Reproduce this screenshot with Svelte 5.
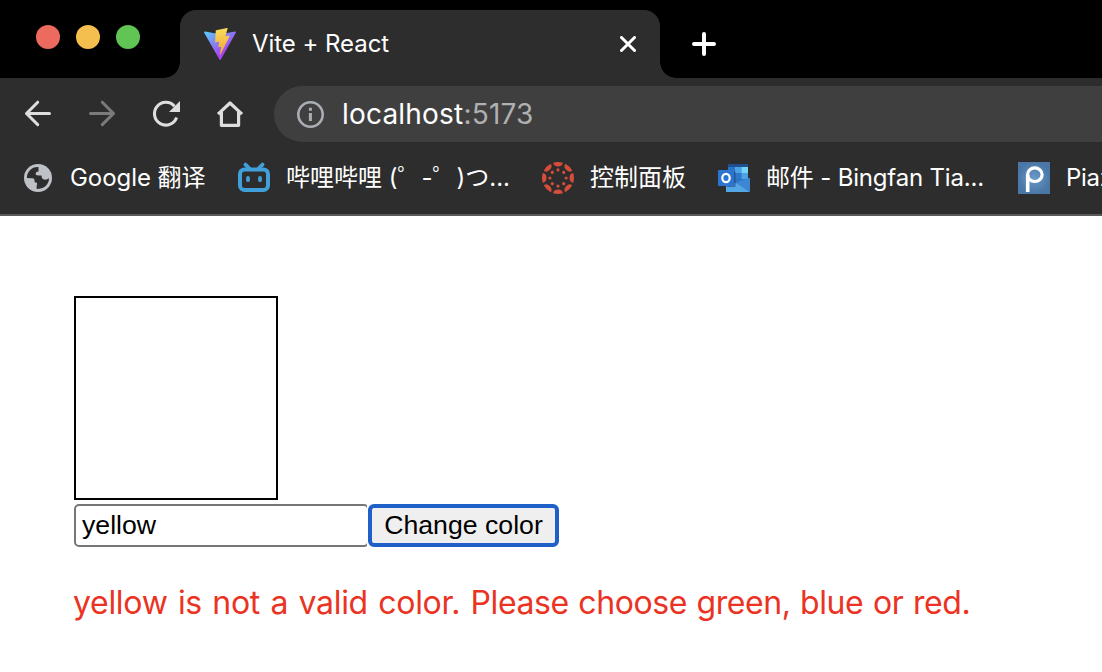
<script>
  const bookmarks = [
    { icon: 'globe', label: 'Google 翻译', width: 216, spacing: -0.05 },
    { icon: 'bili', label: '哔哩哔哩 (゜-゜)つ...', width: 304, spacing: 0 },
    { icon: 'canvas', label: '控制面板', width: 176, spacing: 0 },
    { icon: 'outlook', label: '邮件 - Bingfan Tia...', width: 300, spacing: -0.18 },
    { icon: 'piazza', label: 'Piazza', width: 120, spacing: -0.3 }
  ];
  const spokes = [0, 45, 90, 135, 180, 225, 270, 315];
  let color = $state('yellow');
</script>

<div class="window">
  <header>
    <div class="tabstrip">
      <div class="lights"><i class="red"></i><i class="amber"></i><i class="green"></i></div>
      <div class="tab">
        <svg width="32" height="32" viewBox="0 0 256 257">
          <defs>
            <linearGradient id="v1" x1="-.828%" x2="57.636%" y1="7.652%" y2="78.411%"><stop offset="0" stop-color="#5cc8fa" /><stop offset="1" stop-color="#a843f0" /></linearGradient>
            <linearGradient id="v2" x1="43.376%" x2="50.316%" y1="2.242%" y2="89.03%"><stop offset="0" stop-color="#fbe36a" /><stop offset=".083" stop-color="#f9d857" /><stop offset="1" stop-color="#f3ab3c" /></linearGradient>
          </defs>
          <path fill="url(#v1)" d="M255.153 37.938L134.897 252.976c-2.483 4.44-8.862 4.466-11.382.048L.875 37.958c-2.746-4.814 1.371-10.646 6.827-9.67l120.385 21.517a6.537 6.537 0 0 0 2.322-.004l117.867-21.483c5.438-.991 9.574 4.796 6.877 9.62Z" />
          <path fill="url(#v2)" d="M185.432.063L96.44 17.501a3.268 3.268 0 0 0-2.634 3.014l-5.474 92.456a3.268 3.268 0 0 0 3.997 3.378l24.777-5.718c2.318-.535 4.413 1.507 3.936 3.838l-7.361 36.047c-.495 2.426 1.782 4.5 4.151 3.78l15.304-4.649c2.372-.72 4.652 1.36 4.15 3.788l-11.698 56.621c-.732 3.542 3.979 5.473 5.943 2.437l1.313-2.028l72.516-144.72c1.215-2.423-.88-5.186-3.54-4.672l-25.505 4.922c-2.396.462-4.435-1.77-3.759-4.114l16.646-57.705c.677-2.35-1.37-4.583-3.769-4.113Z" />
        </svg>
        <span class="title">Vite + React</span>
        <svg class="close" width="16" height="16" viewBox="0 0 16 16"><path d="M1.5 1.5 14.5 14.5M14.5 1.5 1.5 14.5" stroke="#fff" stroke-width="3" stroke-linecap="round" /></svg>
      </div>
      <svg class="plus" width="24" height="24" viewBox="0 0 24 24"><path d="M12 2V22M2 12H22" stroke="#fff" stroke-width="4" stroke-linecap="round" /></svg>
    </div>

    <nav class="toolbar">
      <svg class="nav" viewBox="0 0 32 32"><path d="M27.5 15.5H4.5M15.7 4.2 4.5 15.5 15.7 26.6" fill="none" stroke="#dedede" stroke-width="3" stroke-linecap="round" stroke-linejoin="round" /></svg>
      <svg class="nav" viewBox="0 0 32 32"><path d="M4.5 15.5H27.5M16.3 4.2 27.5 15.5 16.3 26.6" fill="none" stroke="#7b7b7b" stroke-width="3" stroke-linecap="round" stroke-linejoin="round" /></svg>
      <svg class="nav" viewBox="0 0 32 32"><path d="M26.6 19.5A11.4 11.4 0 1 1 24.5 8.2" fill="none" stroke="#dedede" stroke-width="3.1" /><path d="M30 3V14H19Z" fill="#dedede" /></svg>
      <svg class="nav" viewBox="0 0 32 32"><path d="M4 16.2 16 5 28 16.2M7.4 14V27.3H24.6V14" fill="none" stroke="#dedede" stroke-width="3.2" stroke-linejoin="round" /></svg>
      <div class="omnibox">
        <svg width="28" height="28" viewBox="0 0 28 28"><circle cx="14.5" cy="14.5" r="12.2" fill="none" stroke="#aaaeb4" stroke-width="2.6" /><path d="M12.9 7.8h3v3h-3ZM12.9 13h3v8h-3Z" fill="#aaaeb4" /></svg>
        <span class="url">localhost<em>:5173</em></span>
      </div>
    </nav>

    <div class="bookmarks">
      {#each bookmarks as b}
        <div class="bookmark" style:width="{b.width}px">
          {#if b.icon === 'globe'}
            <svg viewBox="0 0 32 32"><circle cx="16" cy="16" r="14" fill="#bec1c6" /><path d="M16.5 5C10 4.4 4.8 9.6 4.9 16H11.5Q13.6 16.2 13.6 18.4V20.2H16.2V26.9C22.4 26.8 27.2 22 27 16.3Q24.5 18.4 21.2 17.2Q19.6 16.4 19.4 13.6H13.8V10.8Q14 9.6 16.5 9.4Z" fill="#2d2d2d" /><path d="M5 16C5.2 13.8 6.2 13.2 8 13.2H14.6Q17 13.4 17.2 16.4H19.6V20.4Q19.4 22.2 16.4 22.2V27L12.6 26.5V23.6H15V20.4H13.2Q12.4 20.2 12.4 17.6Q12 16.2 10 16.2Z" fill="#2d2d2d" /><path d="M4.6 17.2H9.6Q12 17.6 12 20.2V22.8H14.6V27.6C9 27.2 4.8 23 4.6 17.2Z" fill="#bec1c6" /></svg>
          {:else if b.icon === 'bili'}
            <svg viewBox="0 0 32 32"><path d="M7.5 2.6 11 6M24.5 2.6 21 6" stroke="#419fd9" stroke-width="3.8" stroke-linecap="round" /><rect x="2" y="7.4" width="28" height="20.6" rx="4.5" fill="none" stroke="#419fd9" stroke-width="4" /><path d="M10 16v2.2M22 16v2.2" stroke="#419fd9" stroke-width="3.8" stroke-linecap="round" /></svg>
          {:else if b.icon === 'canvas'}
            <svg viewBox="0 0 32 32">
              {#each spokes as a}
                <g transform="rotate({a} 16 16)" fill="#d64e3b"><path d="M11.1.8Q16-.8 20.9.8A4.95 4.3 0 0 1 11.1.8Z" /><circle cx="16" cy="7.9" r="1.6" /></g>
              {/each}
            </svg>
          {:else if b.icon === 'outlook'}
            <svg viewBox="0 0 32 32"><path d="M10 2H30V20H10Z" fill="#2a73c8" /><path d="M10 2H30V5H10Z" fill="#20508f" /><path d="M17 5h6.5v6H17Z" fill="#4ba3e3" /><path d="M23.5 5H30v6h-6.5Z" fill="#75d3f8" /><path d="M17 11h6.5v6H17Z" fill="#2e78ca" /><path d="M23.5 11H30v6h-6.5Z" fill="#4ba3e3" /><path d="M30 16.2 32 16V30L16 21Z" fill="#3c86d3" /><path d="M8 18V30H32L18 21Z" fill="#54a7e5" /><path d="M16 9.5H17.5V25H9V24H16Z" fill="#1c467c" opacity=".6" /><rect y="8" width="16" height="16" rx="1" fill="#2b74cf" /><ellipse cx="8" cy="16" rx="3.7" ry="4.1" fill="none" stroke="#fff" stroke-width="2.2" /></svg>
          {:else}
            <svg viewBox="0 0 32 32"><defs><radialGradient id="pz"><stop stop-color="#699aca" /><stop offset="1" stop-color="#4a77a5" /></radialGradient></defs><path d="M0 0H32V32H0Z" fill="url(#pz)" /><path d="M9.7 30V12.5" fill="none" stroke="#fff" stroke-width="3.6" /><ellipse cx="16.8" cy="12.7" rx="7.3" ry="6.8" fill="none" stroke="#fff" stroke-width="3.2" /></svg>
          {/if}
          <span style:letter-spacing="{b.spacing}px">{b.label}</span>
        </div>
      {/each}
    </div>
  </header>

  <main>
    <div class="swatch"></div>
    <form onsubmit={(e) => e.preventDefault()}>
      <div class="field"><input bind:value={color} /></div>
      <button type="button">Change color</button>
    </form>
    <p>yellow is not a valid color. <span>Please choose green, blue or red.</span></p>
  </main>
</div>

<style>
  :global(body) { margin: 0; background: #fff; }
  .window { width: 1102px; height: 672px; overflow: hidden; background: #fff; font-family: Inter, "Noto Sans CJK SC", sans-serif; }
  svg { display: block; flex: none; }
  header { background: #2d2d2d; border-bottom: 2px solid #5a5a5a; height: 214px; overflow: hidden; color: #fff; }
  .tabstrip { height: 78px; background: #000; display: flex; }
  .lights { display: flex; gap: 16px; box-sizing: border-box; width: 180px; padding: 25px 0 0 36px; }
  .lights i { width: 24px; height: 24px; border-radius: 50%; }
  .red { background: #ed6a5e; }
  .amber { background: #f5bf4f; }
  .green { background: #61c554; }
  .tab { position: relative; box-sizing: border-box; width: 480px; height: 68px; margin-top: 10px; padding: 0 24px; background: #2d2d2d; border-radius: 16px 16px 0 0; display: flex; align-items: center; }
  .tab::before, .tab::after { content: ""; position: absolute; bottom: 0; width: 16px; height: 16px; }
  .tab::before { left: -16px; background: radial-gradient(circle at 0 0, transparent 15.5px, #2d2d2d 16px); }
  .tab::after { right: -16px; background: radial-gradient(circle at 100% 0, transparent 15.5px, #2d2d2d 16px); }
  .title { margin-left: 16px; padding-bottom: 2px; font-size: 24px; letter-spacing: -0.05px; white-space: pre; }
  .close { margin-left: auto; }
  .plus { margin: 32px 0 0 32px; }
  .toolbar { height: 72px; display: flex; align-items: center; padding-left: 22px; }
  .nav { width: 32px; height: 32px; margin-right: 32px; }
  .omnibox { flex: 1; height: 56px; margin-left: -4px; box-sizing: border-box; padding-left: 22px; border-radius: 28px 0 0 28px; background: #3f3f3f; display: flex; align-items: center; }
  .url { margin-left: 18px; font-size: 28px; letter-spacing: 0.2px; }
  em { font-style: normal; color: #b0b0b0; }
  .bookmarks { height: 64px; display: flex; padding-left: 22px; }
  .bookmark { flex: none; height: 56px; display: flex; align-items: center; }
  .bookmark svg { width: 32px; height: 32px; margin-right: 16px; }
  .bookmark span { font-size: 24px; white-space: pre; line-height: 32px; }
  main { padding: 80px 0 0 74px; }
  .swatch { box-sizing: border-box; width: 204px; height: 204px; border: 2px solid #000; }
  form { display: flex; gap: 1px; margin-top: 4px; height: 43px; }
  .field { width: 293px; overflow: hidden; }
  input { box-sizing: border-box; width: 295px; height: 43px; margin: 0; padding: 0 6px; border: 2px solid #767676; border-radius: 5px; outline: none; font: 26.67px "Liberation Sans", sans-serif; color: #000; }
  button { box-sizing: border-box; width: 191px; height: 43px; margin: 0; padding: 0; border: 4px solid #1f5fc8; border-radius: 6px; background: #efefef; color: #000; font: 26.67px "Liberation Sans", sans-serif; white-space: nowrap; }
  p { margin: 37px 0 0 -1px; font-size: 32px; line-height: 38px; letter-spacing: -0.3px; word-spacing: 1.7px; color: #eb3323; white-space: nowrap; }
  p span { letter-spacing: -0.42px; word-spacing: 1px; }
</style>
